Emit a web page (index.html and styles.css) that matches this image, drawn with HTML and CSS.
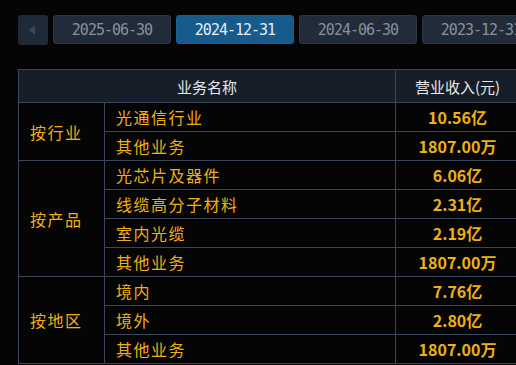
FILE: index.html
```html
<!DOCTYPE html>
<html lang="zh">
<head>
<meta charset="utf-8">
<link rel="stylesheet" href="styles.css">
</head>
<body>
<div class="tabs">
  <div class="prev"><span class="tri"></span></div>
  <div class="tab">2025-06-30</div>
  <div class="tab active">2024-12-31</div>
  <div class="tab">2024-06-30</div>
  <div class="tab">2023-12-31</div>
</div>
<table class="biz">
  <colgroup><col class="c1"><col class="c2"><col class="c3"></colgroup>
  <thead>
    <tr><th colspan="2">业务名称</th><th>营业收入(元)</th></tr>
  </thead>
  <tbody>
    <tr><td class="cat" rowspan="2">按行业</td><td class="name">光通信行业</td><td class="val">10.56亿</td></tr>
    <tr><td class="name">其他业务</td><td class="val">1807.00万</td></tr>
    <tr><td class="cat" rowspan="4">按产品</td><td class="name">光芯片及器件</td><td class="val">6.06亿</td></tr>
    <tr><td class="name">线缆高分子材料</td><td class="val">2.31亿</td></tr>
    <tr><td class="name">室内光缆</td><td class="val">2.19亿</td></tr>
    <tr><td class="name">其他业务</td><td class="val">1807.00万</td></tr>
    <tr><td class="cat" rowspan="3">按地区</td><td class="name">境内</td><td class="val">7.76亿</td></tr>
    <tr><td class="name">境外</td><td class="val">2.80亿</td></tr>
    <tr><td class="name">其他业务</td><td class="val">1807.00万</td></tr>
  </tbody>
</table>
</body>
</html>
```
FILE: styles.css
```css
html, body {
  margin: 0;
  padding: 0;
  background: #050505;
  overflow: hidden;
  width: 516px;
  height: 365px;
}
body {
  font-family: "Noto Sans CJK SC", "Noto Sans", sans-serif;
}
.tabs {
  display: flex;
  gap: 5px;
  padding: 15px 0 0 18px;
  white-space: nowrap;
  width: 600px;
  align-items: flex-start;
}
.prev {
  width: 30px;
  height: 30px;
  box-sizing: border-box;
  background: #1f2a38;
  border-radius: 3px;
  display: flex;
  align-items: center;
  justify-content: center;
  flex: none;
}
.tri {
  width: 0;
  height: 0;
  border-top: 5px solid transparent;
  border-bottom: 5px solid transparent;
  border-right: 6px solid #3a4858;
  margin-right: 2px;
}
.tab {
  flex: none;
  width: 118px;
  height: 29px;
  box-sizing: border-box;
  background: #212b3a;
  border: 1px solid #2b3646;
  border-radius: 3px;
  color: #8b9099;
  font-family: "DejaVu Sans Mono", monospace;
  font-size: 15px;
  letter-spacing: -1px;
  display: flex;
  align-items: center;
  justify-content: center;
}
.tab.active {
  background: #175a8c;
  border-color: #1a5f92;
  color: #e6edf4;
}
.biz {
  margin: 24px 0 0 18px;
  border-collapse: collapse;
  table-layout: fixed;
  width: 501px;
}
.c1 { width: 86px; }
.c2 { width: 291px; }
.c3 { width: 124px; }
.biz th, .biz td {
  border: 1px solid #3a475a;
  padding: 0;
}
.biz th {
  height: 32px;
  background: #161e2a;
  color: #e8e8e8;
  font-weight: normal;
  font-size: 15px;
  text-align: center;
}
.biz td {
  height: 28px;
  color: #eeb012;
  font-size: 16px;
  line-height: 18px;
}
.cat {
  padding-left: 11px !important;
  letter-spacing: 1.5px;
}
.name {
  padding-left: 11px !important;
  letter-spacing: 1.5px;
}
.val {
  text-align: center;
  font-weight: 700;
  font-size: 16px;
}
```
